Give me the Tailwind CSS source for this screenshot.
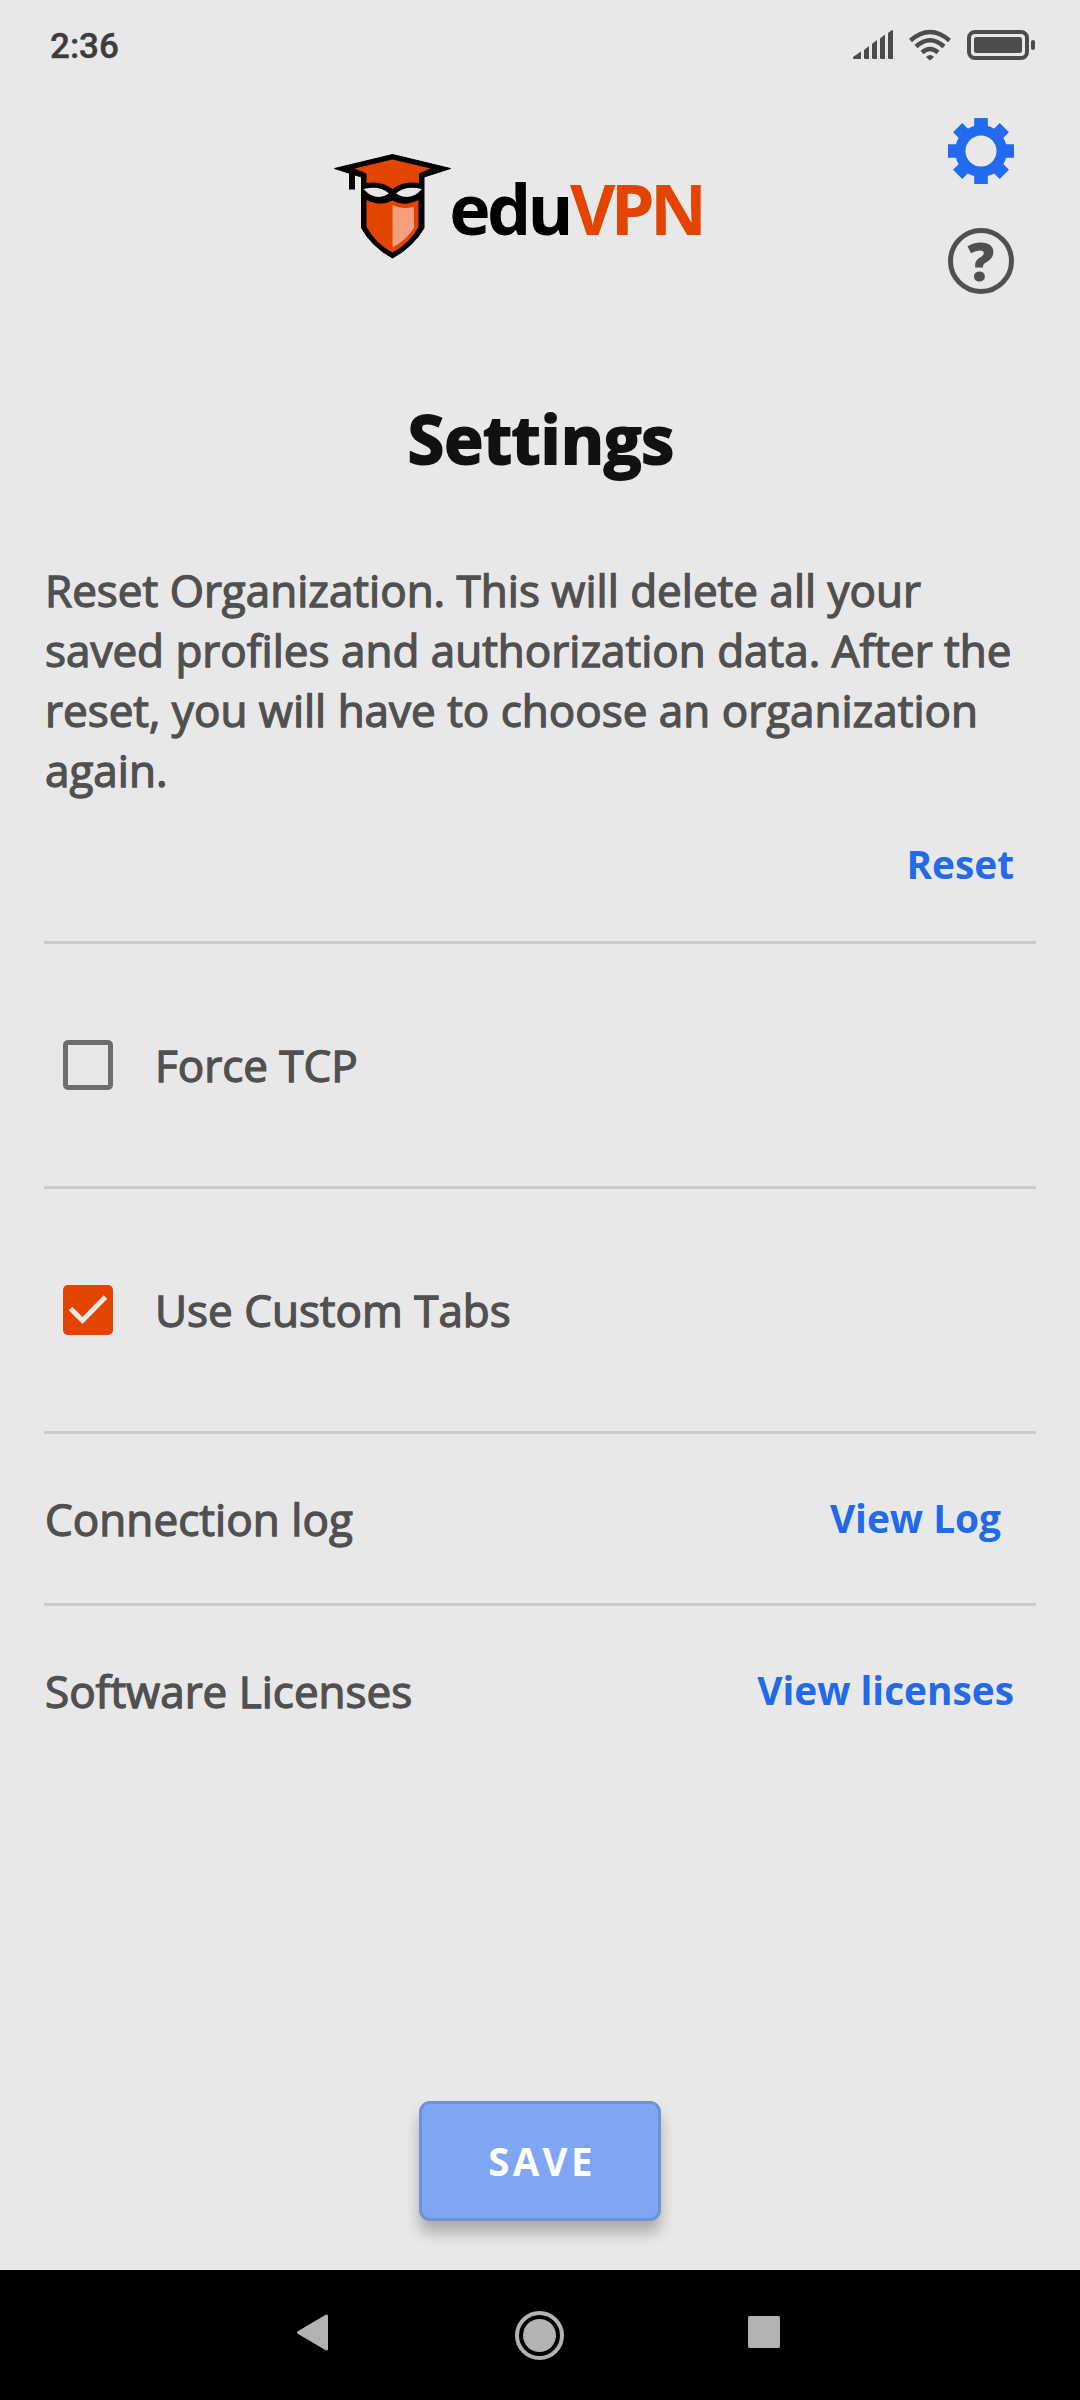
<!DOCTYPE html>
<html lang="en">
<head>
<meta charset="utf-8">
<title>eduVPN Settings</title>
<script src="https://cdn.jsdelivr.net/npm/@tailwindcss/browser@4"></script>
</head>
<body class="bg-[#e8e8e8]">
<div class="flex h-[2400px] w-[1080px] flex-col overflow-hidden bg-[#e8e8e8] font-['Open_Sans',sans-serif] text-[#505050]">
  <!-- Status bar -->
  <header class="flex h-[90px] shrink-0 items-center justify-between pl-[50px] pr-[44px]">
    <span class="pt-[3px] font-['Roboto',sans-serif] text-[35px] font-medium leading-[40px] text-[#3c3c3c] [-webkit-text-stroke:0.400px_#3c3c3c]">2:36</span>
    <svg class="h-[70px] w-[183px]" viewBox="853 10 183 70" fill="#4c4c4c">
      <path d="M853 57l8-5.500v7.500h-7q-1 0-1-1zM864 50l5-4v12q0 1-1 1h-3q-1 0-1-1zM872 44l5-4v18q0 1-1 1h-3q-1 0-1-1zM880 38.500l5-4v23.500q0 1-1 1h-3q-1 0-1-1zM888 33l4-3q1 0 1 1v27q0 1-1 1h-3q-1 0-1-1z"/>
      <g fill="none" stroke="#4c4c4c" stroke-width="4">
        <path stroke-width="4.500" d="M910.500 40.500Q930 23.500 949.500 40.500M916 46.500Q930 34 944 46.500M922 52.500Q930 45.500 938 52.500"/>
        <rect x="969" y="32" width="58" height="26" rx="6"/>
      </g>
      <path d="M926 57q4-4 8 0l-3.300 3q-.7.500-1.400 0z"/>
      <rect x="974" y="37" width="48" height="16" rx="2.500"/>
      <rect x="1031" y="40" width="4" height="10" rx="2"/>
    </svg>
  </header>

  <!-- Logo and toolbar -->
  <section class="flex h-[220px] shrink-0 items-start justify-between pl-[330px] pr-[66px]">
    <svg class="mt-[50px] h-[130px] w-[390px]" viewBox="330 140 390 130">
      <path d="M352 171.500v18" stroke="#000" stroke-width="6"/>
      <path d="M334.500 168.500L392.500 154.500 450.500 168.500 424 177V228Q413 247 392.500 258 372 247 361.500 228V177z" stroke="#000" stroke-width="1" stroke-linejoin="round"/>
      <path d="M354.500 168.500L392.500 159.500 430.500 168.500 419 173.500V183Q403 180.500 392.500 189 382 180.500 366.500 183V173.500z" fill="#e34400"/>
      <path d="M363.500 189Q380 185 389 193.500 376 202.500 363.500 189M422 189Q405 185 396 193.500 410 202.500 422 189" fill="#e8e8e8"/>
      <path d="M366.500 200Q381 207 392.500 200.500 404 207 418.500 200V227Q409 244 392.500 252.500 376 244 366.500 227z" fill="#e34400"/>
      <path d="M392.500 205Q403 210.500 414 206.500V228Q406 240.500 392.500 247.500z" fill="#f4a080"/>
      <text x="449.300" y="235" font-size="70" font-weight="700" letter-spacing="-3.700">edu</text>
      <text x="570" y="235" font-size="70" font-weight="700" letter-spacing="-4.700" fill="#e34400">VPN</text>
    </svg>
    <div class="mt-[28px] flex flex-col gap-[44px]">
      <svg class="size-[66px]" viewBox="-33 -33 66 66" fill="#226af0">
        <path d="M-6.800-33H6.800V33H-6.800zM-33-6.800H33V6.800H-33z"/>
        <path d="M-6.500-33H6.500V33H-6.500zM-33-6.500H33V6.500H-33z" transform="rotate(45)"/>
        <circle r="26"/>
        <circle r="15.500" fill="#e8e8e8"/>
      </svg>
      <div class="flex size-[66px] items-center justify-center rounded-full border-5 border-[#505050] pb-[2px] text-[53px] font-extrabold leading-[55px]">?</div>
    </div>
  </section>

  <main class="flex grow flex-col px-[44px]">
    <h1 class="mt-[83px] pl-[2px] text-center text-[66px] font-bold leading-[90px] text-[#111] [-webkit-text-stroke:2px_#111]">Settings</h1>
    <p class="mt-[77px] whitespace-nowrap pl-px text-[44px] leading-[60px] [-webkit-text-stroke:1.300px_#505050]">Reset Organization. This will delete all your<br>saved profiles and authorization data. After the<br>reset, you will have to choose an organization<br>again.</p>
    <div class="flex h-[144px] shrink-0 items-center justify-end border-b-3 border-[#cbcbcb] pb-[12px] pr-[22px] text-[38.800px] font-bold text-[#226ae8]"><button>Reset</button></div>
    <label class="flex h-[245px] shrink-0 items-center border-b-3 border-[#cbcbcb] pl-[19px] text-[44px] [-webkit-text-stroke:1.300px_#505050]">
      <span class="mr-[42px] size-[50px] rounded-[5px] border-[5.500px] border-[#6d6d6d]"></span><span class="pb-px">Force TCP</span>
    </label>
    <label class="flex h-[245px] shrink-0 items-center border-b-3 border-[#cbcbcb] pl-[19px] text-[44px] [-webkit-text-stroke:1.300px_#505050]">
      <svg class="mr-[42px] size-[50px] rounded-[5px] bg-[#e34400]" viewBox="0 0 50 50" fill="none" stroke="#f0e9e5" stroke-width="5"><path d="M7.500 23.500L19.500 35.500 42.500 12"/></svg><span class="pb-px">Use Custom Tabs</span>
    </label>
    <div class="flex h-[172px] shrink-0 items-center justify-between border-b-3 border-[#cbcbcb] pl-px pr-[35px]">
      <span class="text-[44px] tracking-[0.060px] [-webkit-text-stroke:1.300px_#505050]">Connection log</span>
      <button class="text-[38.800px] font-bold text-[#226ae8]">View Log</button>
    </div>
    <div class="flex h-[169px] shrink-0 items-center justify-between pl-px pr-[22px]">
      <span class="text-[44px] [-webkit-text-stroke:1.300px_#505050]">Software Licenses</span>
      <button class="text-[38.800px] font-bold text-[#226ae8]">View licenses</button>
    </div>
    <button class="mb-[49px] mt-auto h-[120px] w-[242px] self-center rounded-[11px] border-3 border-[#6f92d2] bg-[#7ea6f3] pl-[4px] pt-[2px] text-[38.500px] font-bold tracking-[3.300px] text-white shadow-[0_12px_14px_rgba(0,0,0,0.250)]">SAVE</button>
  </main>

  <nav class="flex h-[130px] shrink-0 items-start bg-black pl-[297px]">
    <svg class="mt-[44px] h-[37px] w-[31px]" viewBox="0 0 31 37" fill="#b3b3b3" stroke="#b3b3b3" stroke-width="3" stroke-linejoin="round"><path d="M1.500 18.500L29.500 2V35z"/></svg>
    <svg class="ml-[187px] mt-[41px] size-[49px]" viewBox="0 0 49 49"><circle cx="24.500" cy="24.500" r="22.500" fill="none" stroke="#b3b3b3" stroke-width="4"/><circle cx="24.500" cy="24.500" r="16.500" fill="#b3b3b3"/></svg>
    <div class="ml-[184px] mt-[46px] size-[32px] rounded-[2px] bg-[#b3b3b3]"></div>
  </nav>
</div>
</body>
</html>
